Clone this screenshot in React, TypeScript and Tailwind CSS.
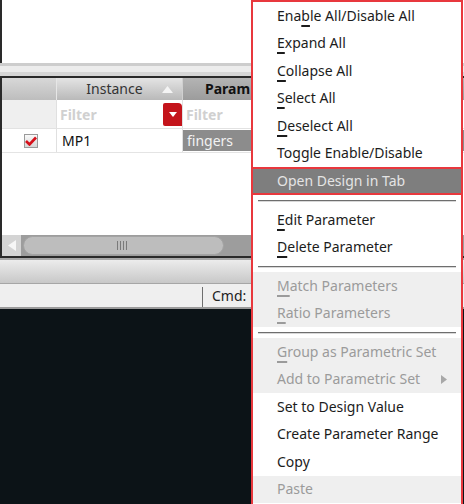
import React from "react";

type Item = {
  label: React.ReactNode;
  disabled?: boolean;
  active?: boolean;
  submenu?: boolean;
};

const U = ({ children }: { children: React.ReactNode }) => (
  <span className="underline decoration-[1.5px] underline-offset-[4px]">{children}</span>
);

const groups: Item[][] = [
  [
    { label: <>Ena<U>b</U>le All/Disable All</> },
    { label: <><U>E</U>xpand All</> },
    { label: <><U>C</U>ollapse All</> },
    { label: <><U>S</U>elect All</> },
    { label: <><U>D</U>eselect All</> },
    { label: <>Toggle Enable/Disable</> },
    { label: <>Open Design in Tab</>, active: true },
  ],
  [
    { label: <><U>E</U>dit Parameter</> },
    { label: <><U>D</U>elete Parameter</> },
  ],
  [
    { label: <><U>M</U>atch Parameters</>, disabled: true },
    { label: <><U>R</U>atio Parameters</>, disabled: true },
  ],
  [
    { label: <><U>G</U>roup as Parametric Set</>, disabled: true },
    { label: <>Add to Parametric Set</>, disabled: true, submenu: true },
    { label: <>Set to Design Value</> },
    { label: <>Create Parameter Range</> },
    { label: <>Copy</> },
    { label: <>Paste</>, disabled: true },
  ],
];

function MenuRow({ item }: { item: Item }) {
  if (item.active) {
    return (
      <div className="h-[28px] flex items-center pl-[24px] bg-[#7e7e7e] text-[#e4e4e4] border-y-2 border-[#e8383d]">
        {item.label}
      </div>
    );
  }
  return (
    <div
      className={
        "h-[27.5px] flex items-center pl-[24px] pr-[14px] " +
        (item.disabled ? "bg-[#efefef] text-[#9b9b9b]" : "bg-white text-[#1c1c1c]")
      }
    >
      <span className="flex-1">{item.label}</span>
      {item.submenu && (
        <svg width="6" height="9" viewBox="0 0 6 9">
          <path d="M0 0 L6 4.5 L0 9 Z" fill="#a8a8a8" />
        </svg>
      )}
    </div>
  );
}

function ContextMenu() {
  return (
    <div className="absolute left-[251px] top-0 w-[212px] h-[520px] border-2 border-[#e8383d] bg-white text-[14px] leading-none">
      {groups.map((g, gi) => (
        <div key={gi}>
          {gi > 0 && (
            <div className="h-[11px] flex items-center px-[5px] bg-white">
              <div className="w-full h-px bg-[#6e6e6e] shadow-[0_1px_0_#d8d8d8]" />
            </div>
          )}
          {g.map((it, i) => (
            <MenuRow key={i} item={it} />
          ))}
        </div>
      ))}
    </div>
  );
}

function Checkbox() {
  return (
    <div className="w-[14px] h-[14px] border border-[#9a9a9a] bg-gradient-to-b from-[#fafafa] to-[#d6d6d6] flex items-center justify-center">
      <svg width="12" height="10" viewBox="0 0 12 10">
        <path d="M1 5 L4.5 8.5 L11 1.5" stroke="#d6101a" strokeWidth="2.6" fill="none" />
      </svg>
    </div>
  );
}

export default function App() {
  return (
    <div className="relative w-[464px] h-[504px] overflow-hidden bg-white font-['Noto_Sans',sans-serif]">
      <div className="flex flex-col h-full">
        {/* upper pane */}
        <div className="h-[63px] bg-white border-l-2 border-[#2a2a2a]" />
        <div className="h-[13px] flex flex-col">
          <div className="h-[3px] bg-[#cdcdcd]" />
          <div className="h-[6px] bg-[#ececec]" />
          <div className="h-[4px] bg-[#d6d6d6]" />
        </div>

        {/* table */}
        <div className="h-[182px] border-y-2 border-l-2 border-[#2a2a2a] flex flex-col bg-white">
          <div className="h-[22px] flex text-[14px] leading-none">
            <div className="w-[55px] bg-gradient-to-b from-[#d8d8d8] to-[#bdbdbd] border-r border-[#e6e6e6]" />
            <div className="w-[126px] bg-gradient-to-b from-[#e4e4e4] to-[#b9b9b9] flex items-center border-r border-[#d0d0d0]">
              <span className="flex-1 text-center pl-[10px] text-[#333]">Instance</span>
              <svg width="11" height="7" viewBox="0 0 11 7" className="mr-[9px]">
                <path d="M0 7 L5.5 0 L11 7 Z" fill="#f4f4f4" />
              </svg>
            </div>
            <div className="flex-1 bg-gradient-to-b from-[#b4b4b4] to-[#9c9c9c] flex items-center pl-[22px] font-bold text-[#111]">
              <span className="whitespace-nowrap">Param</span>
            </div>
          </div>
          <div className="h-[29px] flex border-b border-[#e2e2e2] text-[14px] font-bold text-[#d0d0d0]">
            <div className="w-[55px] bg-[#efefef] border-r border-[#e0e0e0]" />
            <div className="w-[126px] flex items-center pl-[3px] border-r border-[#e0e0e0]">
              <span className="flex-1">Filter</span>
              <div className="w-[19px] h-[23px] bg-[#c4141b] rounded-tr-[4px] rounded-l-[2px] flex items-center justify-center">
                <svg width="8" height="5" viewBox="0 0 8 5">
                  <path d="M0 0 L8 0 L4 5 Z" fill="#fff" />
                </svg>
              </div>
            </div>
            <div className="flex-1 flex items-center pl-[3px]">Filter</div>
          </div>
          <div className="h-[24px] flex border-b border-[#e4e4e4] text-[14px]">
            <div className="w-[55px] flex items-center justify-center pl-[4px] border-r border-[#e0e0e0]">
              <Checkbox />
            </div>
            <div className="w-[126px] flex items-center pl-[5px] text-[#111] border-r border-[#e0e0e0]">MP1</div>
            <div className="flex-1 flex items-center pl-[4px] bg-[#8c8c8c] text-[#f2f2f2] my-[1px]">fingers</div>
          </div>
          <div className="flex-1" />
          {/* horizontal scrollbar */}
          <div className="h-[21px] flex bg-[#9d9d9d]">
            <div className="w-[19px] bg-[#d4d4d4] flex items-center justify-center">
              <svg width="8" height="11" viewBox="0 0 8 11">
                <path d="M8 0 L0 5.5 L8 11 Z" fill="#f6f6f6" />
              </svg>
            </div>
            <div className="w-[201px] ml-[2px] my-[1px] rounded-full bg-[#bdbdbd] border border-[#a3a3a3] flex items-center justify-center">
              <div className="flex gap-[2px] mr-[4px]">
                <div className="w-px h-[9px] bg-[#7a7a7a]" />
                <div className="w-px h-[9px] bg-[#7a7a7a]" />
                <div className="w-px h-[9px] bg-[#7a7a7a]" />
                <div className="w-px h-[9px] bg-[#7a7a7a]" />
              </div>
            </div>
          </div>
        </div>

        {/* toolbar band */}
        <div className="h-[2px] bg-[#a8a8a8]" />
        <div className="h-[24px] bg-gradient-to-b from-[#ececec] to-[#c8c8c8] border-b border-[#a6a6a6]" />
        {/* status bar */}
        <div className="h-[23px] bg-[#efefef] flex items-center text-[14px] text-[#222]">
          <div className="w-[202px]" />
          <div className="w-px h-[20px] bg-[#6e6e6e] mt-[2px]" />
          <span className="pl-[9px]">Cmd:</span>
        </div>
        <div className="h-[2px] bg-[#9a9a9a]" />
        <div className="flex-1 bg-[#0c1317]" />
      </div>

      <ContextMenu />
    </div>
  );
}
